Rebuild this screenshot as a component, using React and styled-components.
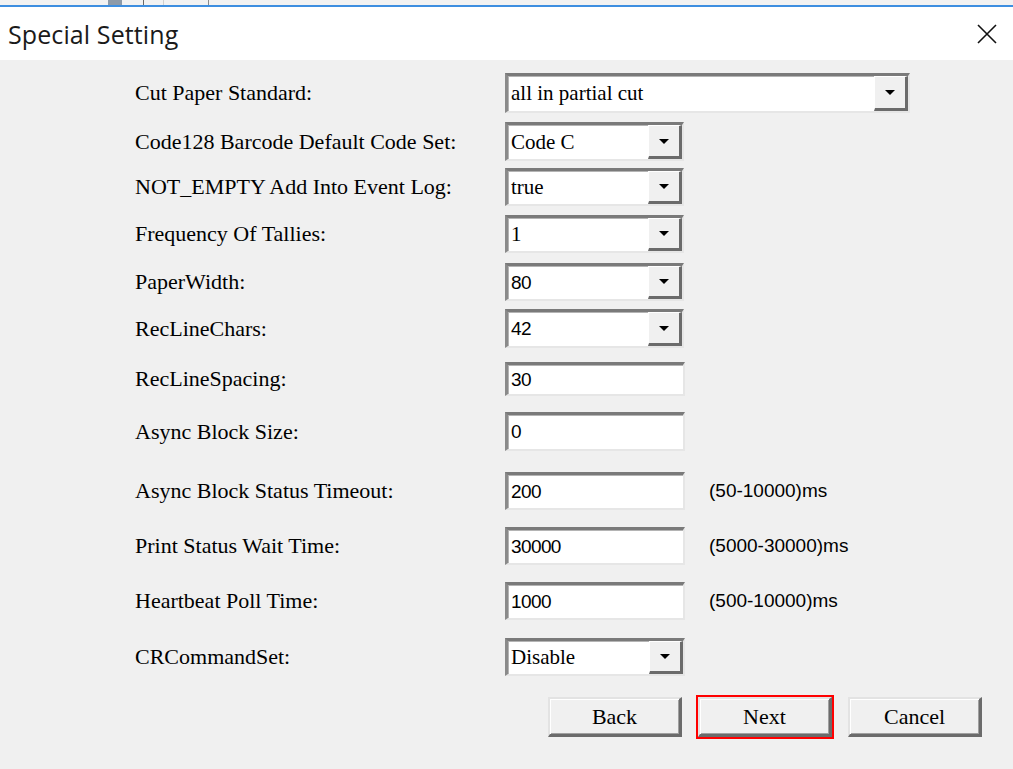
import React from 'react';
import styled, { createGlobalStyle } from 'styled-components';

const GlobalStyle = createGlobalStyle`
  html, body {
    margin: 0;
    padding: 0;
    background: #f0f0f0;
  }
  #root {
    width: 1013px;
    height: 769px;
    overflow: hidden;
  }
`;

const serif = "'Liberation Serif', 'DejaVu Serif', serif";
const sans = "'Liberation Sans', 'DejaVu Sans', sans-serif";

const Window = styled.div`
  display: flex;
  flex-direction: column;
  width: 1013px;
  height: 769px;
  background: #f0f0f0;
`;

const TopStrip = styled.div`
  position: relative;
  height: 5px;
  background: #f2f2f2;
  border-bottom: 2px solid #3d8ee0;
`;

const StripMark = styled.span`
  position: absolute;
  top: 0;
  left: ${(p) => p.$x}px;
  width: ${(p) => p.$w}px;
  height: 5px;
  background: ${(p) => p.$c};
`;

const TitleBar = styled.div`
  display: flex;
  align-items: center;
  justify-content: space-between;
  height: 53px;
  padding: 0 14px 0 8px;
  background: #ffffff;
`;

const Title = styled.h1`
  margin: 0;
  font-family: 'Open Sans', 'Noto Sans', sans-serif;
  font-weight: 400;
  font-size: 25px;
  letter-spacing: 0.1px;
  color: #1a1a1a;
`;

const CloseButton = styled.button`
  display: flex;
  align-items: center;
  justify-content: center;
  width: 24px;
  height: 24px;
  padding: 0;
  border: none;
  background: transparent;
`;

const Body = styled.div`
  flex: 1;
  padding-top: 13px;
  font-family: ${serif};
  font-size: 22px;
  color: #000;
`;

const Row = styled.div`
  display: flex;
  align-items: flex-start;
  height: ${(p) => p.$h}px;
`;

const Field = styled.div`
  display: flex;
  align-items: center;
  height: ${(p) => p.$ctl}px;
`;

const Label = styled.label`
  flex-shrink: 0;
  width: 505px;
  box-sizing: border-box;
  padding-left: 135px;
  white-space: nowrap;
`;

const Sunken = styled.div`
  display: flex;
  align-items: stretch;
  flex-shrink: 0;
  box-sizing: border-box;
  width: ${(p) => p.$w}px;
  height: ${(p) => p.$h}px;
  background: #ffffff;
  border-style: solid;
  border-width: 3px 2px 2px 3px;
  border-color: #7a7a7a #e6e6e6 #e6e6e6 #8a8a8a;
  box-shadow: inset 1px 1px 0 #b4b4b4;
`;

const Value = styled.span`
  flex: 1;
  display: flex;
  align-items: center;
  padding-left: 3px;
  white-space: nowrap;
  font-family: ${(p) => (p.$sans ? sans : serif)};
  font-size: ${(p) => (p.$sans ? '19px' : '21px')};
  letter-spacing: ${(p) => (p.$sans ? '-0.6px' : '0')};
`;

const DropButton = styled.span`
  display: flex;
  align-items: center;
  justify-content: center;
  width: 34px;
  box-sizing: border-box;
  background: #f0f0f0;
  border-style: solid;
  border-width: 1px 3px 3px 1px;
  border-color: #ffffff #6b6b6b #6b6b6b #ffffff;
`;

const Arrow = styled.span`
  width: 0;
  height: 0;
  border-left: 5px solid transparent;
  border-right: 5px solid transparent;
  border-top: 5px solid #000;
`;

const Hint = styled.span`
  margin-left: 24px;
  white-space: nowrap;
  font-family: ${sans};
  font-size: 19px;
  letter-spacing: 0;
`;

const ButtonBar = styled.div`
  display: flex;
  gap: 16px;
  padding-left: 548px;
`;

const DialogButton = styled.button`
  width: 134px;
  height: 40px;
  box-sizing: border-box;
  padding: 0;
  font-family: ${serif};
  font-size: 22px;
  color: #000;
  background: #f0f0f0;
  border-style: solid;
  border-width: 2px 3px 3px 2px;
  border-color: #e3e3e3 #6b6b6b #6b6b6b #e3e3e3;
  box-shadow: inset 1px 1px 0 #ffffff, inset -1px -1px 0 #a0a0a0;
  outline: ${(p) => (p.$focus ? '2px solid #ff0000' : 'none')};
  outline-offset: 0;
`;

const rows = [
  { label: 'Cut Paper Standard:', kind: 'select', value: 'all in partial cut', w: 405, h: 49, ctl: 40 },
  { label: 'Code128 Barcode Default Code Set:', kind: 'select', value: 'Code C', w: 179, h: 46, ctl: 39 },
  { label: 'NOT_EMPTY Add Into Event Log:', kind: 'select', value: 'true', w: 179, h: 47, ctl: 38 },
  { label: 'Frequency Of Tallies:', kind: 'select', value: '1', w: 179, h: 48, ctl: 38 },
  { label: 'PaperWidth:', kind: 'select', value: '80', sans: true, w: 179, h: 46, ctl: 38 },
  { label: 'RecLineChars:', kind: 'select', value: '42', sans: true, w: 179, h: 53, ctl: 39 },
  { label: 'RecLineSpacing:', kind: 'input', value: '30', w: 180, h: 50, ctl: 34 },
  { label: 'Async Block Size:', kind: 'input', value: '0', w: 180, h: 60, ctl: 39 },
  { label: 'Async Block Status Timeout:', kind: 'input', value: '200', hint: '(50-10000)ms', w: 180, h: 55, ctl: 38 },
  { label: 'Print Status Wait Time:', kind: 'input', value: '30000', hint: '(5000-30000)ms', w: 180, h: 55, ctl: 38 },
  { label: 'Heartbeat Poll Time:', kind: 'input', value: '1000', hint: '(500-10000)ms', w: 180, h: 56, ctl: 38 },
  { label: 'CRCommandSet:', kind: 'select', value: 'Disable', w: 180, h: 59, ctl: 38 },
];

const CloseIcon = () => (
  <svg width="22" height="22" viewBox="0 0 22 22">
    <path d="M2 2 L20 20 M20 2 L2 20" stroke="#111" strokeWidth="1.6" fill="none" />
  </svg>
);

const SettingRow = ({ row }) => (
  <Row $h={row.h}>
    <Field $ctl={row.ctl}>
      <Label>{row.label}</Label>
      <Sunken $w={row.w} $h={row.ctl}>
        <Value $sans={row.sans || row.kind === 'input'}>{row.value}</Value>
        {row.kind === 'select' && (
          <DropButton>
            <Arrow />
          </DropButton>
        )}
      </Sunken>
      {row.hint && <Hint>{row.hint}</Hint>}
    </Field>
  </Row>
);

export default function App() {
  return (
    <>
      <GlobalStyle />
      <Window>
        <TopStrip>
          <StripMark $x={108} $w={14} $c="#8d9aa8" />
          <StripMark $x={143} $w={1} $c="#6a6a6a" />
          <StripMark $x={163} $w={1} $c="#d0d0d0" />
          <StripMark $x={208} $w={1} $c="#8a8a8a" />
        </TopStrip>
        <TitleBar>
          <Title>Special Setting</Title>
          <CloseButton aria-label="Close">
            <CloseIcon />
          </CloseButton>
        </TitleBar>
        <Body>
          {rows.map((row) => (
            <SettingRow key={row.label} row={row} />
          ))}
          <ButtonBar>
            <DialogButton>Back</DialogButton>
            <DialogButton $focus>Next</DialogButton>
            <DialogButton>Cancel</DialogButton>
          </ButtonBar>
        </Body>
      </Window>
    </>
  );
}
